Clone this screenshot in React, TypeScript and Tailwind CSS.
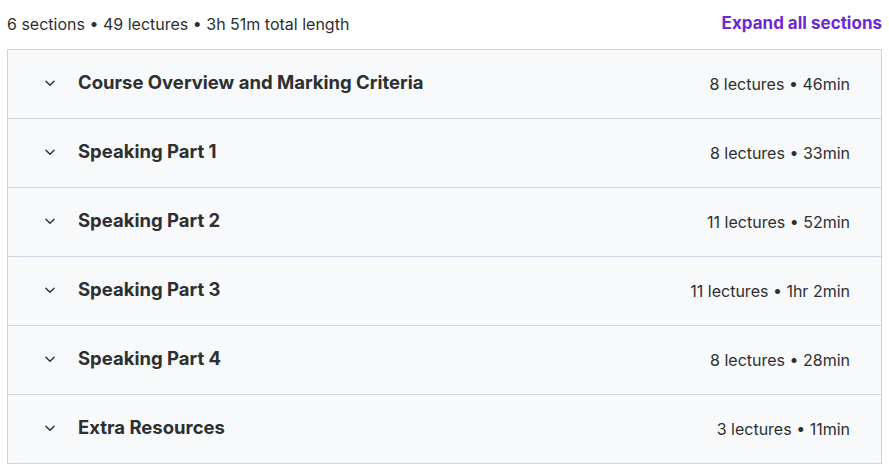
import React from 'react'

const sections = [
  { title: 'Course Overview and Marking Criteria', meta: '8 lectures • 46min' },
  { title: 'Speaking Part 1', meta: '8 lectures • 33min' },
  { title: 'Speaking Part 2', meta: '11 lectures • 52min' },
  { title: 'Speaking Part 3', meta: '11 lectures • 1hr 2min' },
  { title: 'Speaking Part 4', meta: '8 lectures • 28min' },
  { title: 'Extra Resources', meta: '3 lectures • 11min' },
]

function Chevron() {
  return (
    <svg width="14" height="14" viewBox="0 0 24 24" fill="none" stroke="#2d2f31" strokeWidth="2.4" strokeLinecap="round" strokeLinejoin="round">
      <path d="M5 9l7 7 7-7" />
    </svg>
  )
}

export default function App() {
  return (
    <div className="w-[889px] bg-white pl-[7px] pr-[7px] text-[#2d2f31] font-['Inter',sans-serif]">
      <div className="flex h-[49px] items-center justify-between pb-[2px]">
        <span className="text-[16px] text-[#2d2f31]">6 sections • 49 lectures • 3h 51m total length</span>
        <button className="text-[17px] font-bold text-[#6d28d2]">Expand all sections</button>
      </div>
      <div className="border border-[#d1d2e0] bg-[#f7f9fa]">
        {sections.map((s, i) => (
          <div
            key={i}
            className={`flex items-center justify-between pl-[35px] pr-[31px] ${i > 0 ? 'h-[69px] border-t border-[#d1d2e0]' : 'h-[68px]'}`}
          >
            <div className="flex items-center gap-[21px] pb-[3px]">
              <Chevron />
              <span className="text-[18.5px] font-bold">{s.title}</span>
            </div>
            <span className="text-[16px]">{s.meta}</span>
          </div>
        ))}
      </div>
    </div>
  )
}
